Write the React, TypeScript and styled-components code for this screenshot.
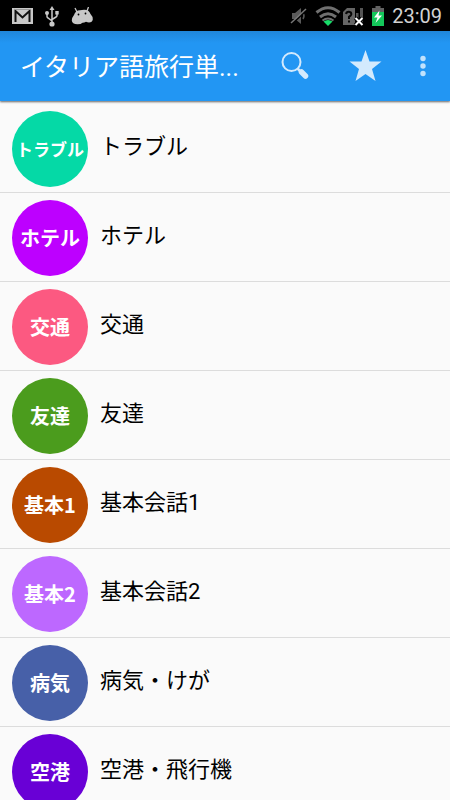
import React from "react";
import styled, { createGlobalStyle } from "styled-components";

const GlobalStyle = createGlobalStyle`
  *, *::before, *::after { box-sizing: border-box; }
  html { height: 100%; overflow: hidden; }
  body {
    margin: 0;
    height: 100%;
    overflow: hidden;
    background: #fafafa;
    color: #000;
    font-family: Roboto, "Noto Sans CJK JP", sans-serif;
  }
  #root { height: 100%; }
`;

const Screen = styled.div`
  display: flex;
  flex-direction: column;
  height: 100%;
`;

const StatusBar = styled.div`
  flex: none;
  display: flex;
  align-items: center;
  justify-content: space-between;
  height: 31px;
  padding: 1px 8px 0 12px;
  background: #000;
`;

const StatusGroup = styled.div<{ $gap: number }>`
  display: flex;
  align-items: center;
  gap: ${({ $gap }) => $gap}px;
`;

const StatusIcon = styled.svg`
  display: block;
  flex: none;
`;

const Clock = styled.time`
  color: #d2d2d2;
  font-size: 20px;
  line-height: 24px;
`;

const AppBar = styled.header`
  flex: none;
  z-index: 1;
  display: flex;
  align-items: center;
  height: 70px;
  padding: 0 5px 0 20px;
  background: linear-gradient(#2086d9, #2296f3 12px);
  box-shadow: 0 1px 2px rgba(0, 0, 0, 0.6);
`;

const Title = styled.h1`
  flex: 1;
  min-width: 0;
  margin: 0;
  padding-top: 4px;
  overflow: hidden;
  white-space: nowrap;
  color: #fff;
  font-size: 25px;
  font-weight: 400;
  line-height: 36px;
`;

const IconButton = styled.button<{ $width: number }>`
  flex: none;
  display: flex;
  align-items: center;
  justify-content: center;
  width: ${({ $width }) => $width}px;
  height: 70px;
  padding: 0;
  border: 0;
  background: none;
  color: #d3eafd;
  cursor: pointer;
`;

const List = styled.ul`
  flex: 1;
  min-height: 0;
  overflow: hidden;
  margin: 0;
  padding: 3px 0 0;
  list-style: none;
`;

const Row = styled.li`
  border-bottom: 1px solid #dcdcdc;
`;

const RowLink = styled.a`
  display: flex;
  gap: 12px;
  height: 88px;
  padding: 7px 12px;
  color: inherit;
  text-decoration: none;
`;

const Badge = styled.span<{ $color: string; $small?: boolean }>`
  flex: none;
  display: flex;
  align-items: center;
  justify-content: center;
  width: 76px;
  height: 76px;
  border-radius: 50%;
  background: ${({ $color }) => $color};
  color: #fff;
  font-family: "Noto Sans CJK JP", sans-serif;
  font-size: ${({ $small }) => ($small ? 17 : 20)}px;
  font-weight: 700;
  line-height: 24px;
  white-space: nowrap;
`;

const Label = styled.span`
  padding-top: 20px;
  font-size: 22px;
  line-height: 32px;
`;

const categories = [
  { label: "トラブル", badge: "トラブル", color: "#05d9a6", small: true },
  { label: "ホテル", badge: "ホテル", color: "#bd00ff" },
  { label: "交通", badge: "交通", color: "#fc5981" },
  { label: "友達", badge: "友達", color: "#4b9c1d" },
  { label: "基本会話1", badge: "基本1", color: "#b94a00" },
  { label: "基本会話2", badge: "基本2", color: "#bd68ff" },
  { label: "病気・けが", badge: "病気", color: "#4760a8" },
  { label: "空港・飛行機", badge: "空港", color: "#6900d6" },
];

const MailIcon = () => (
  <StatusIcon width="21" height="16" viewBox="0 0 21 16" aria-hidden="true">
    <path d="M0 0h21v16H0z" fill="#c8c8c8" />
    <path d="M3.500 14V3L10.500 9.500 17.500 3v11" fill="none" stroke="#111" strokeWidth="2" />
    <path d="M2 1.500h17" stroke="#999" strokeWidth="1" />
  </StatusIcon>
);

const UsbIcon = () => (
  <StatusIcon width="14" height="21" viewBox="0 0 14 21" aria-hidden="true">
    <g fill="none" stroke="#c8c8c8" strokeWidth="1.500">
      <path d="M7 3v15M2 7v3.500q0 1 1 1.500l4 3M12 7v2.500q0 1-1 1.500l-4 2.500" />
    </g>
    <g fill="#c8c8c8">
      <path d="M7 0l2.500 4h-5zM10.300 5h3.400v3.400h-3.400z" />
      <circle cx="2" cy="7" r="2" />
      <circle cx="7" cy="18" r="2.600" />
    </g>
  </StatusIcon>
);

const DroidIcon = () => (
  <StatusIcon width="22" height="18" viewBox="0 0 22 18" aria-hidden="true">
    <path d="M4 1l2 4M17.500 0l-1.500 4" stroke="#c8c8c8" strokeWidth="1.300" />
    <path
      d="M3 8Q4.500 3.500 9 3.300l4-.6q5-.2 6.500 4.300 2.500 2.500 2.300 5.500-.5 3-3.800 3-1.500 0-3-.8-1.500 1-3.500 1-1.500 1.500-5 1.500Q1 17 .8 13.500.6 11 3 8z"
      fill="#c8c8c8"
    />
    <circle cx="7.500" cy="7.500" r="0.900" fill="#000" />
    <circle cx="14.500" cy="6.500" r="0.900" fill="#000" />
  </StatusIcon>
);

const MuteIcon = () => (
  <StatusIcon width="17" height="18" viewBox="0 0 17 18" aria-hidden="true">
    <path d="M2 6h3l6-5v16l-6-5H2z" fill="#5a5a5a" />
    <path d="M13 6q2 3 0 6" fill="none" stroke="#5a5a5a" strokeWidth="1.500" />
    <path d="M2 17L17 3" stroke="#000" strokeWidth="1.500" />
    <path d="M1 16L16 2" stroke="#777" strokeWidth="1.500" />
  </StatusIcon>
);

const WifiIcon = () => (
  <StatusIcon width="26" height="20" viewBox="0 0 26 20" aria-hidden="true">
    <g fill="none" stroke="#707070" strokeWidth="3">
      <path d="M1.500 6.500Q13-3 24.500 6.500M5 11q8-6.500 16 0" />
    </g>
    <path d="M7.500 14.500q5.500-4 11 0" fill="none" stroke="#707070" strokeWidth="2" />
    <path d="M8.500 15.500q4.500-3 9 0L13 20z" fill="#18dc69" />
  </StatusIcon>
);

const SimIcon = () => (
  <StatusIcon width="22" height="19" viewBox="0 0 22 19" aria-hidden="true">
    <path d="M5 1h8v17H1V5z" fill="#666" />
    <path d="M14 6h2.500v12H14zM18 1h3v17h-3z" fill="#555" />
    <path d="M4 7q.5-2.500 3-2.300 2.500.3 2.300 2.500-.3 1.300-2.300 2.600V12M7 13.500v2" fill="none" stroke="#060606" strokeWidth="2" />
    <path d="M13.500 11l7 7M20.500 11l-7 7" stroke="#000" strokeWidth="4" />
    <path d="M13.500 11l7 7M20.500 11l-7 7" stroke="#fff" strokeWidth="2" />
  </StatusIcon>
);

const BatteryIcon = () => (
  <StatusIcon width="12" height="20" viewBox="0 0 12 20" aria-hidden="true">
    <path d="M3.500 0h5v2H12v5H0V2h3.500z" fill="#626262" />
    <path d="M0 6h12v14H0z" fill="#13c75a" />
    <path d="M7.500 4.500L2 11.500h3.500L3.500 17 10 9.500H6.500z" fill="#fff" />
  </StatusIcon>
);

const SearchIcon = () => (
  <svg width="28" height="28" viewBox="0 0 28 28" aria-hidden="true">
    <circle cx="10.500" cy="10" r="9" fill="none" stroke="currentColor" strokeWidth="2" />
    <path d="M16.500 16.500l3 3" stroke="currentColor" strokeWidth="2.500" />
    <path d="M20.500 20l4 4" stroke="currentColor" strokeWidth="5.500" strokeLinecap="round" />
  </svg>
);

const StarIcon = () => (
  <svg width="33" height="32" viewBox="0 0 32 32" aria-hidden="true">
    <path d="M16 0l4 11.500h12l-9.500 7.500 3.500 12L16 24 6 31l3.500-12L0 11.500h12z" fill="currentColor" />
  </svg>
);

const MoreIcon = () => (
  <svg width="6" height="22" viewBox="0 0 6 22" aria-hidden="true">
    <g fill="currentColor" fillOpacity="0.9">
      <circle cx="3" cy="3.500" r="2.700" />
      <circle cx="3" cy="11" r="2.700" />
      <circle cx="3" cy="18.500" r="2.700" />
    </g>
  </svg>
);

export default function App() {
  return (
    <>
      <GlobalStyle />
      <Screen>
        <StatusBar>
          <StatusGroup $gap={12}>
            <MailIcon />
            <UsbIcon />
            <DroidIcon />
          </StatusGroup>
          <StatusGroup $gap={8}>
            <MuteIcon />
            <StatusGroup $gap={1}>
              <WifiIcon />
              <SimIcon />
            </StatusGroup>
            <BatteryIcon />
            <Clock>23:09</Clock>
          </StatusGroup>
        </StatusBar>
        <AppBar>
          <Title>イタリア語旅行単...</Title>
          <IconButton type="button" aria-label="検索" $width={70}>
            <SearchIcon />
          </IconButton>
          <IconButton type="button" aria-label="お気に入り" $width={70}>
            <StarIcon />
          </IconButton>
          <IconButton type="button" aria-label="その他" $width={45}>
            <MoreIcon />
          </IconButton>
        </AppBar>
        <List>
          {categories.map(({ label, badge, color, small }) => (
            <Row key={label}>
              <RowLink href="#">
                <Badge $color={color} $small={small} aria-hidden="true">
                  {badge}
                </Badge>
                <Label>{label}</Label>
              </RowLink>
            </Row>
          ))}
        </List>
      </Screen>
    </>
  );
}
